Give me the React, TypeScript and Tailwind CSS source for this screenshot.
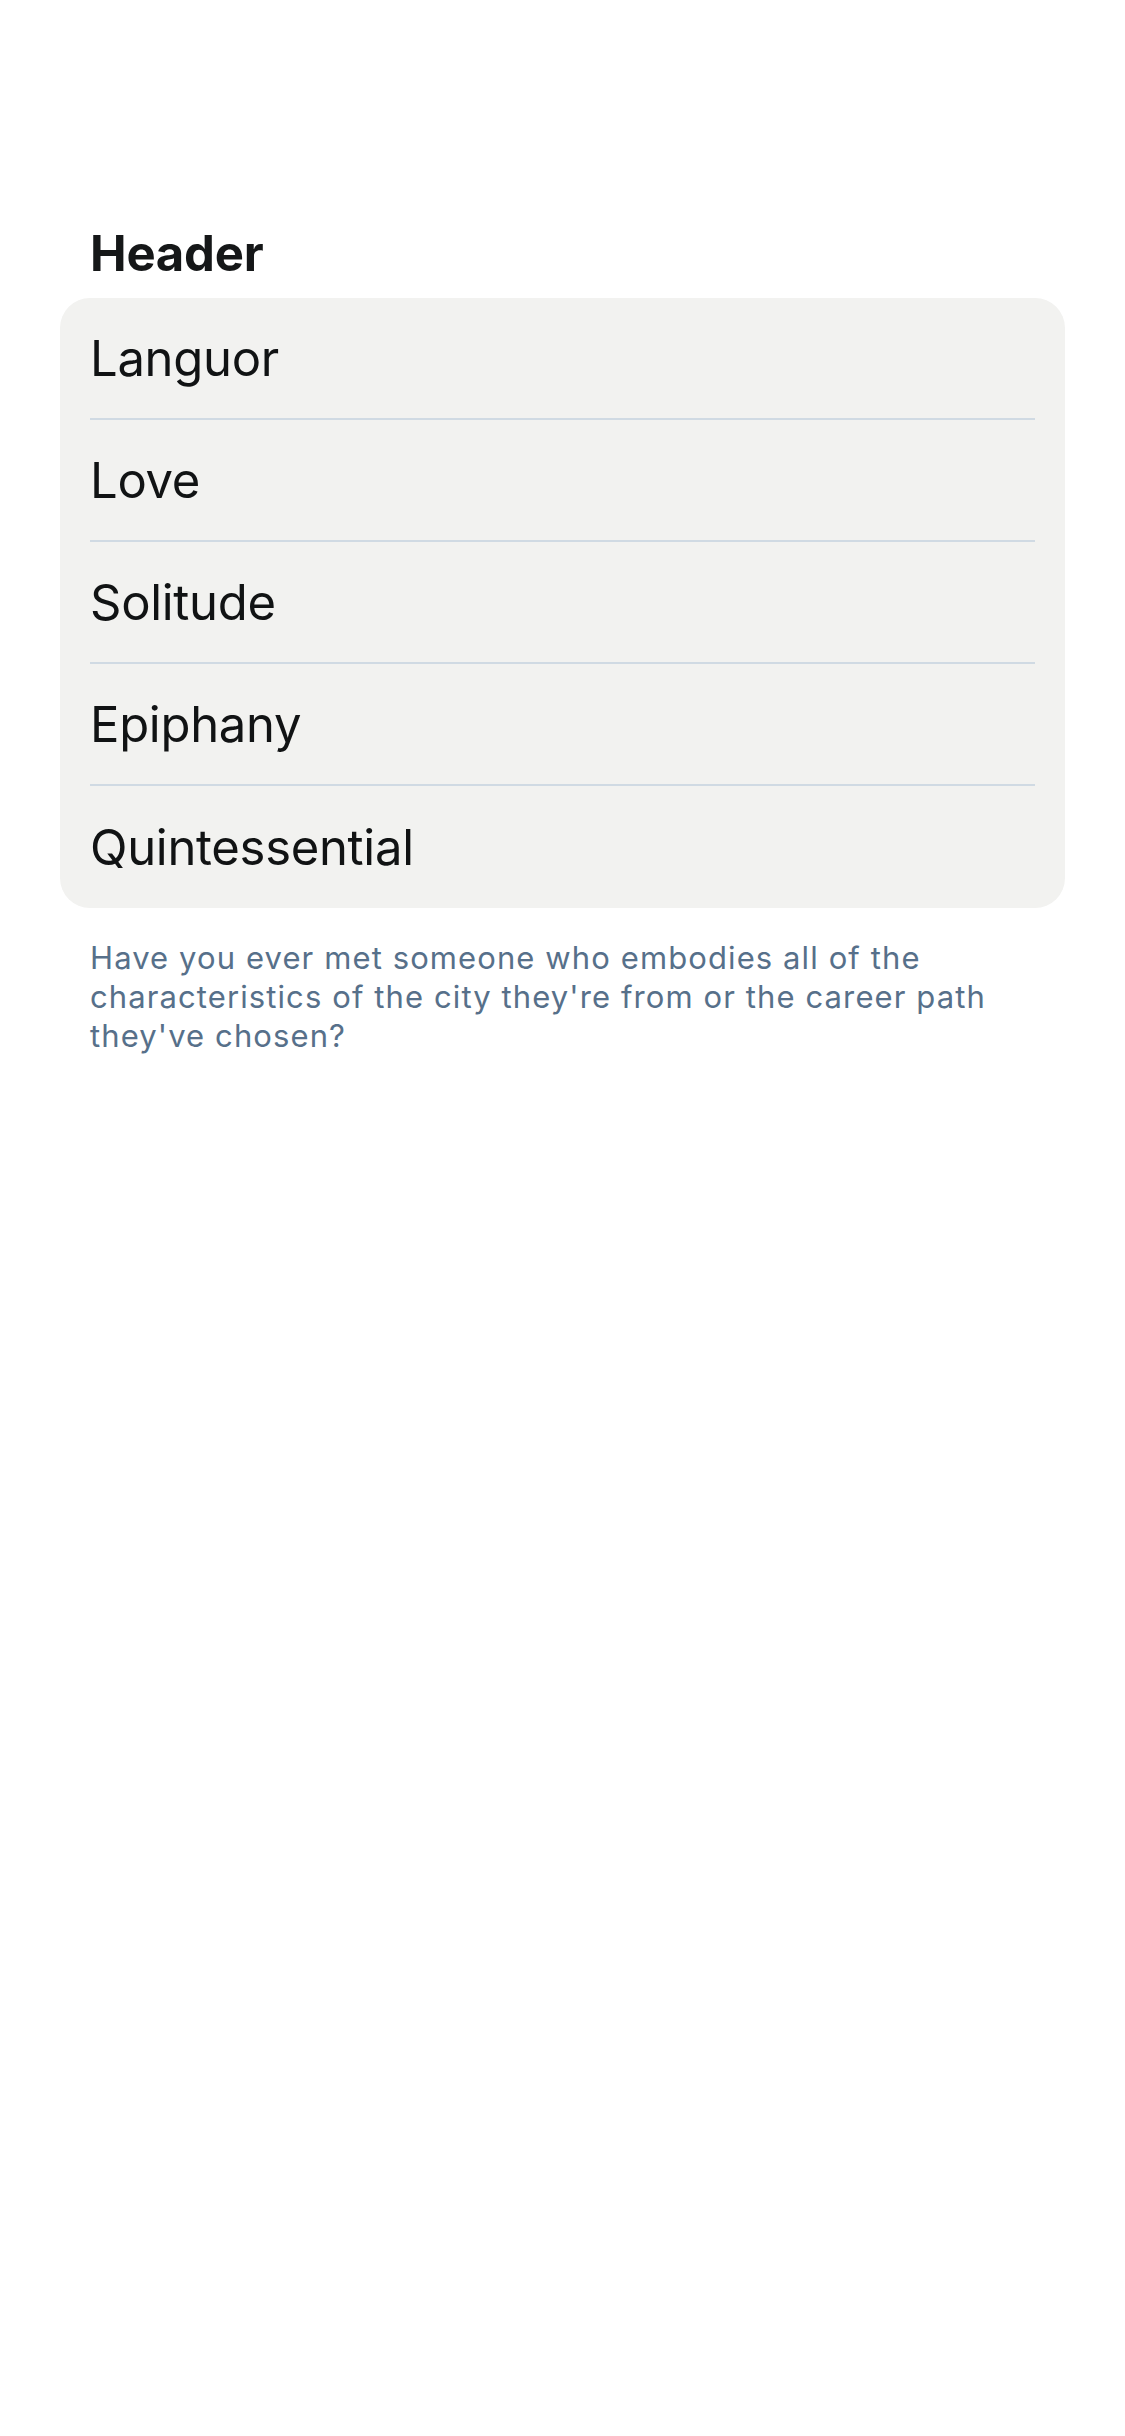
const items = ["Languor", "Love", "Solitude", "Epiphany", "Quintessential"];

export default function App() {
  return (
    <div
      className="min-h-[2436px] w-[1125px] bg-white"
      style={{ fontFamily: "Inter, 'Noto Sans', sans-serif" }}
    >
      <div className="px-[60px] pt-[223px]">
        <h2 className="px-[30px] text-[49px] font-bold leading-[62px] tracking-[-0.2px] text-[#151718]">
          Header
        </h2>
        <div className="mt-[13px] overflow-hidden rounded-[30px] bg-[#f2f2f0]">
          {items.map((item, i) => (
            <div key={item} className="px-[30px]">
              <div
                className={`flex h-[122px] items-center ${
                  i < items.length - 1 ? "border-b-2 border-[#d0dae3]" : ""
                }`}
              >
                <span className="text-[49px] leading-none tracking-[-0.3px] text-[#111314]">
                  {item}
                </span>
              </div>
            </div>
          ))}
        </div>
        <p className="mt-[30px] px-[30px] text-[31px] leading-[39px] tracking-[1.1px] text-[#57708a]">
          Have you ever met someone who embodies all of the characteristics of the city
          they're from or the career path they've chosen?
        </p>
      </div>
    </div>
  );
}
